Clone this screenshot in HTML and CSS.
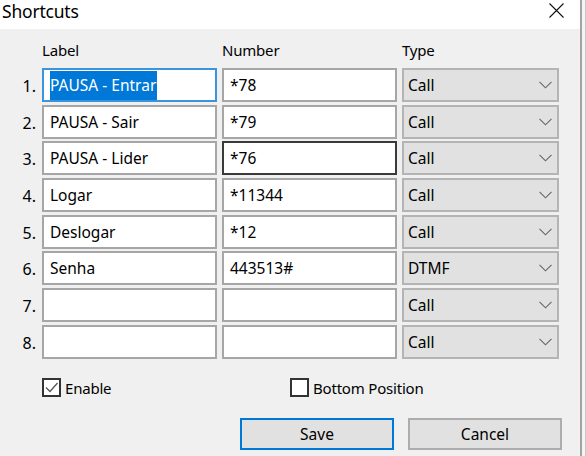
FILE: index.html
```html
<!DOCTYPE html>
<html>
<head>
<meta charset="utf-8">
<link rel="stylesheet" href="styles.css">
</head>
<body>
<div class="screen">
  <div class="dialog">
    <div class="titlebar">
      <span class="title">Shortcuts</span>
      <svg class="close" width="15" height="15" viewBox="0 0 15 15"><path d="M0.5 0.5 L14.5 14.5 M14.5 0.5 L0.5 14.5" stroke="#111" stroke-width="1.1" fill="none"/></svg>
    </div>
    <div class="content">
      <div class="cols head">
        <div></div>
        <div class="hdr">Label</div>
        <div class="hdr">Number</div>
        <div class="hdr">Type</div>
      </div>
      <div class="cols rows">
        <div class="num">1.</div>
        <div class="field focus"><span class="sel">PAUSA - Entrar</span></div>
        <div class="field">*78</div>
        <div class="select">Call<svg class="chev" width="13" height="8" viewBox="0 0 13 8"><path d="M0.5 0.8 L6.5 6.8 L12.5 0.8" stroke="#666" stroke-width="1.1" fill="none"/></svg></div>

        <div class="num">2.</div>
        <div class="field">PAUSA - Sair</div>
        <div class="field">*79</div>
        <div class="select">Call<svg class="chev" width="13" height="8" viewBox="0 0 13 8"><path d="M0.5 0.8 L6.5 6.8 L12.5 0.8" stroke="#666" stroke-width="1.1" fill="none"/></svg></div>

        <div class="num">3.</div>
        <div class="field">PAUSA - Lider</div>
        <div class="field hover">*76</div>
        <div class="select">Call<svg class="chev" width="13" height="8" viewBox="0 0 13 8"><path d="M0.5 0.8 L6.5 6.8 L12.5 0.8" stroke="#666" stroke-width="1.1" fill="none"/></svg></div>

        <div class="num">4.</div>
        <div class="field">Logar</div>
        <div class="field">*11344</div>
        <div class="select">Call<svg class="chev" width="13" height="8" viewBox="0 0 13 8"><path d="M0.5 0.8 L6.5 6.8 L12.5 0.8" stroke="#666" stroke-width="1.1" fill="none"/></svg></div>

        <div class="num">5.</div>
        <div class="field">Deslogar</div>
        <div class="field">*12</div>
        <div class="select">Call<svg class="chev" width="13" height="8" viewBox="0 0 13 8"><path d="M0.5 0.8 L6.5 6.8 L12.5 0.8" stroke="#666" stroke-width="1.1" fill="none"/></svg></div>

        <div class="num">6.</div>
        <div class="field">Senha</div>
        <div class="field">443513#</div>
        <div class="select">DTMF<svg class="chev" width="13" height="8" viewBox="0 0 13 8"><path d="M0.5 0.8 L6.5 6.8 L12.5 0.8" stroke="#666" stroke-width="1.1" fill="none"/></svg></div>

        <div class="num">7.</div>
        <div class="field"></div>
        <div class="field"></div>
        <div class="select">Call<svg class="chev" width="13" height="8" viewBox="0 0 13 8"><path d="M0.5 0.8 L6.5 6.8 L12.5 0.8" stroke="#666" stroke-width="1.1" fill="none"/></svg></div>

        <div class="num">8.</div>
        <div class="field"></div>
        <div class="field"></div>
        <div class="select">Call<svg class="chev" width="13" height="8" viewBox="0 0 13 8"><path d="M0.5 0.8 L6.5 6.8 L12.5 0.8" stroke="#666" stroke-width="1.1" fill="none"/></svg></div>
      </div>
      <div class="options">
        <label class="opt first"><span class="box"><svg width="15" height="15" viewBox="0 0 15 15"><path d="M2 7.5 L6 11.5 L13.5 3" stroke="#555" stroke-width="1.3" fill="none"/></svg></span>Enable</label>
        <label class="opt"><span class="box"></span>Bottom Position</label>
      </div>
      <div class="buttons">
        <div class="btn default">Save</div>
        <div class="btn">Cancel</div>
      </div>
    </div>
  </div>
  <div class="behind"></div>
</div>
</body>
</html>
```

FILE: styles.css
```css
html, body {
  margin: 0;
  padding: 0;
}
body {
  font-family: "Noto Sans", "Open Sans", sans-serif;
  font-size: 16px;
  color: #000;
  background: #f0f0f0;
}
.screen {
  display: flex;
  width: 586px;
  height: 456px;
  overflow: hidden;
}
.dialog {
  width: 580px;
  flex: none;
  border-right: 2px solid #a3a3a3;
  background: #f0f0f0;
  display: flex;
  flex-direction: column;
}
.behind {
  flex: 1;
  background: #f4f4f4;
  border-right: 1px solid #c8c8c8;
}
.titlebar {
  height: 29px;
  background: #fff;
  display: flex;
  align-items: flex-start;
  flex: none;
}
.title {
  font-size: 17.5px;
  line-height: 22px;
  padding-left: 2px;
  letter-spacing: -0.2px;
}
.close {
  margin-left: auto;
  margin-right: 16px;
  margin-top: 3px;
}
.content {
  padding-top: 11px;
}
.cols {
  display: grid;
  grid-template-columns: 29px 175px 175px 157px;
  column-gap: 5px;
  padding-left: 8px;
}
.head {
  height: 20px;
  margin-bottom: 8px;
}
.hdr {
  line-height: 20px;
  font-size: 15px;
  letter-spacing: -0.2px;
}
.rows {
  grid-auto-rows: 34px;
  row-gap: 2.7px;
}
.num {
  text-align: right;
  line-height: 36px;
  padding-right: 1px;
}
.field {
  background: #fff;
  border: 2px solid #a6a6a6;
  box-sizing: border-box;
  padding-left: 6px;
  line-height: 30px;
  white-space: nowrap;
  overflow: hidden;
  font-size: 15.5px;
}
.field.focus {
  border-color: #3b95dc;
}
.field.hover {
  border-color: #3a3a3a;
}
.sel {
  background: #0078d7;
  color: #fff;
  padding: 3px 1px 4px 0;
}
.select {
  background: #e1e1e1;
  border: 2px solid #b4b4b4;
  box-sizing: border-box;
  padding-left: 4px;
  padding-right: 5px;
  line-height: 30px;
  display: flex;
  align-items: center;
  justify-content: space-between;
  font-size: 15.5px;
}
.chev {
  flex: none;
}
.options {
  display: flex;
  padding-left: 42px;
  margin-top: 19px;
  height: 20px;
  align-items: center;
  font-size: 15px;
  letter-spacing: -0.2px;
}
.opt {
  display: flex;
  align-items: center;
  gap: 4px;
  line-height: 20px;
}
.opt.first {
  width: 248px;
}
.box {
  width: 19px;
  height: 19px;
  box-sizing: border-box;
  border: 2px solid #333;
  background: #fff;
  display: flex;
  align-items: center;
  justify-content: center;
}
.buttons {
  display: flex;
  justify-content: flex-end;
  gap: 14px;
  padding-right: 18px;
  margin-top: 20px;
  font-size: 15.5px;
}
.btn {
  width: 154px;
  height: 32px;
  box-sizing: border-box;
  background: #e1e1e1;
  border: 2px solid #adadad;
  text-align: center;
  line-height: 28px;
}
.btn.default {
  border-color: #0078d7;
}
```
